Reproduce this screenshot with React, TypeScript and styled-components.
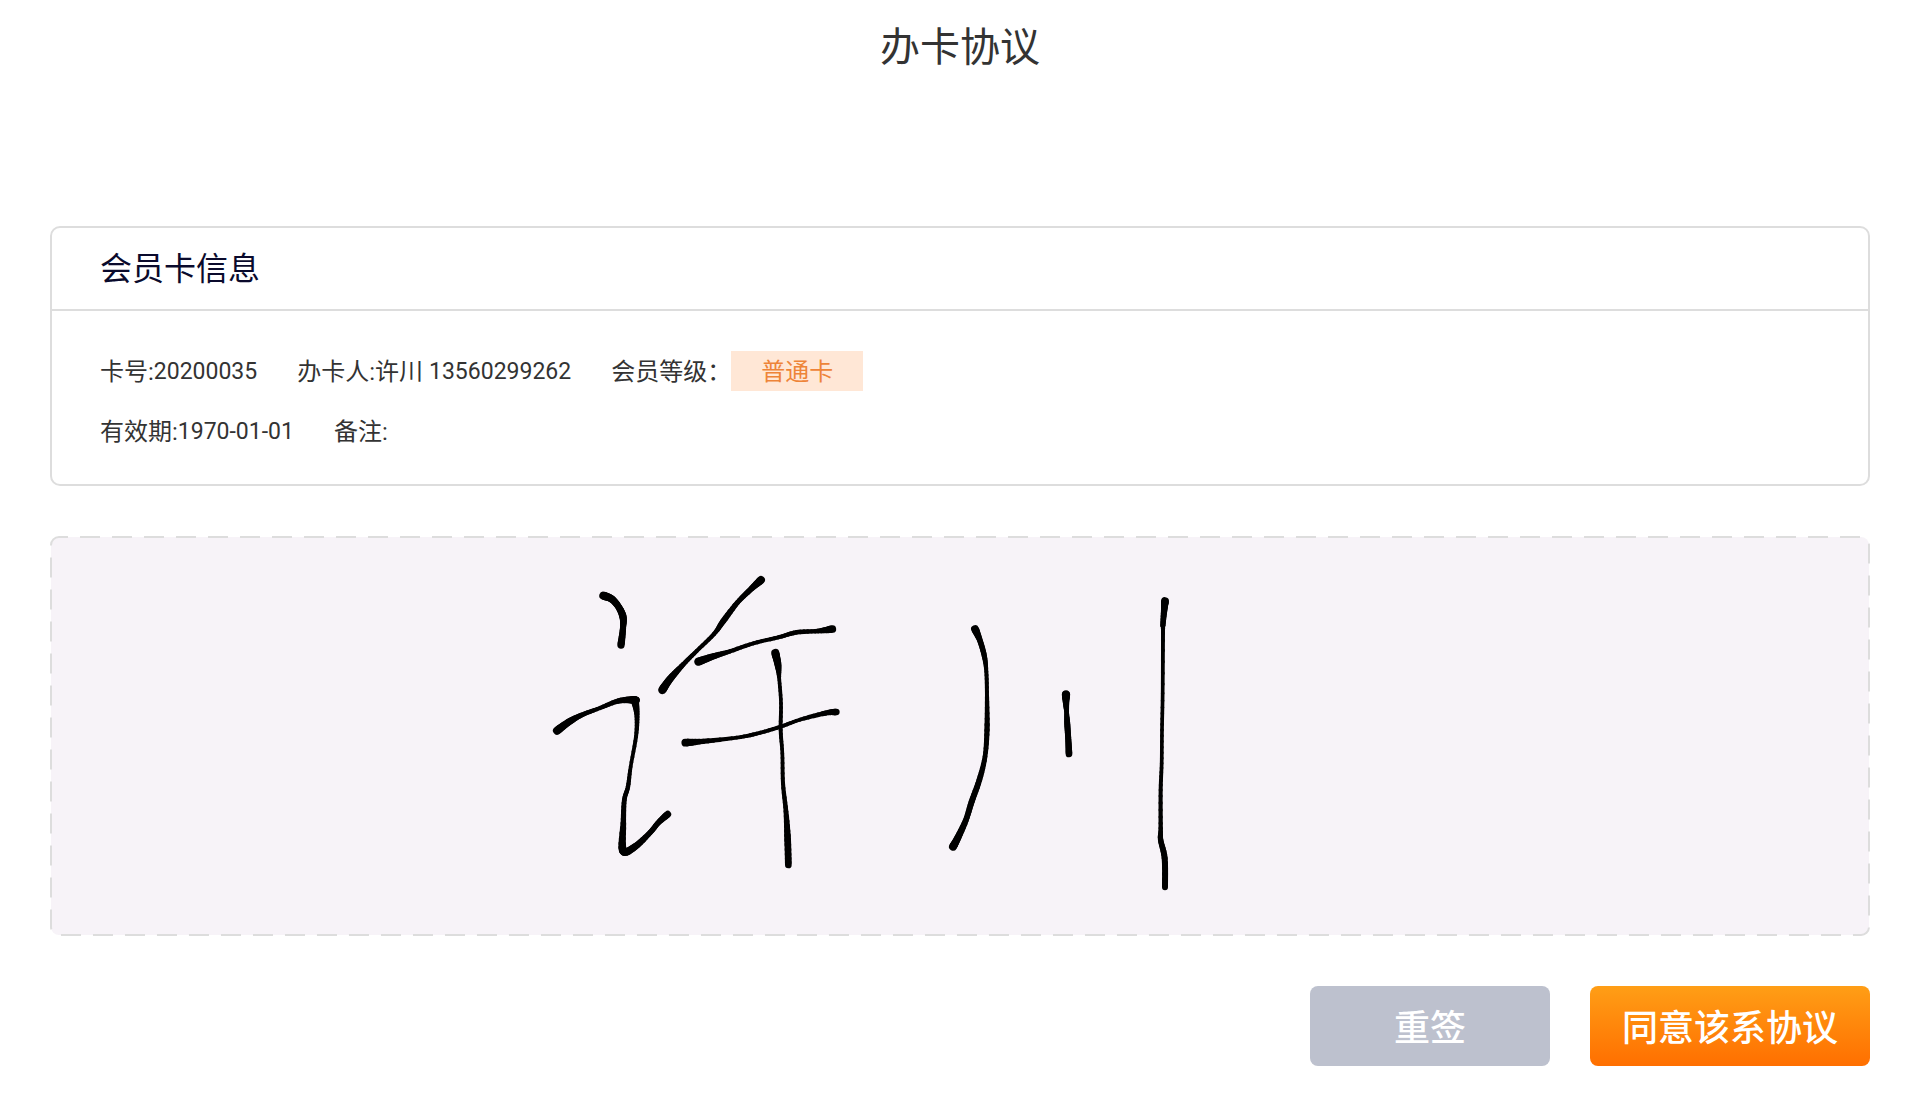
import React from "react";
import styled, { createGlobalStyle } from "styled-components";

const GlobalStyle = createGlobalStyle`
  *, *::before, *::after { box-sizing: border-box; }
  body {
    margin: 0;
    background: #fff;
    color: #333;
    font-family: Roboto, "Noto Sans CJK SC", sans-serif;
  }
`;

const Page = styled.div`
  display: flex;
  flex-direction: column;
  padding: 0 50px 50px;
`;

const Title = styled.h1`
  margin: 0 0 130px;
  font-size: 40px;
  line-height: 96px;
  font-weight: 400;
  text-align: center;
`;

const Stack = styled.main`
  display: flex;
  flex-direction: column;
  gap: 50px;
`;

const Card = styled.section`
  border: 2px solid #ddd;
  border-radius: 10px;
`;

const CardTitle = styled.h2`
  margin: 0;
  padding: 1px 48px 0;
  border-bottom: 2px solid #ddd;
  color: #0a0a2c;
  font-size: 32px;
  line-height: 80px;
  font-weight: 400;
`;

const CardBody = styled.div`
  display: flex;
  flex-direction: column;
  gap: 20px;
  padding: 40px 48px 33px;
`;

const InfoRow = styled.div`
  display: flex;
  gap: 40px;
  height: 40px;
  font-size: 24px;
  line-height: 42px;
`;

const Field = styled.span`
  display: flex;
  white-space: pre;
`;

const Digits = styled.span`
  font-size: 23px;
`;

const Tag = styled.span`
  height: 40px;
  padding: 0 30px;
  background: #ffe7d6;
  color: #ee8438;
`;

const Pad = styled.div`
  position: relative;
  height: 400px;
  overflow: hidden;
`;

const PadFrame = styled.svg`
  position: absolute;
  inset: 0;
  width: 100%;
  height: 100%;
`;

const Ink = styled.svg`
  position: relative;
  display: block;
  height: 100%;
`;

const Actions = styled.footer`
  display: flex;
  justify-content: flex-end;
  gap: 40px;
`;

const Button = styled.button<{ $primary?: boolean }>`
  width: ${(p) => (p.$primary ? 280 : 240)}px;
  height: 80px;
  padding: 0 0 2px;
  border: 0;
  border-radius: 8px;
  background: ${(p) => (p.$primary ? "linear-gradient(#ff9e16, #ff6f00)" : "#bdc1ce")};
  color: #fff;
  font-family: inherit;
  font-size: 36px;
  font-weight: 500;
  cursor: pointer;
`;

/* A pen sample: x, y, line width. */
type Sample = [number, number, number];

const xu: Sample[][] = [
  [[190, 107, 25], [215, 117, 22], [236, 141, 20], [249, 171, 22], [249, 205, 18], [243, 255, 22]],
  [[51, 512, 25], [88, 485, 21], [125, 465, 15], [180, 444, 12], [235, 423, 15], [283, 420, 23], [286, 428, 23], [291, 470, 15], [288, 530, 12], [272, 620, 11], [264, 680, 13], [253, 720, 14], [250, 790, 16], [249, 872, 24], [285, 860, 21], [330, 818, 16], [355, 788, 16], [383, 763, 21]],
  [[663, 60, 25], [630, 90, 17], [592, 128, 15], [550, 183, 18], [522, 222, 13], [470, 273, 12], [430, 313, 14], [390, 357, 21], [367, 390, 25]],
  [[475, 305, 26], [520, 289, 19], [570, 274, 13], [640, 250, 12], [715, 232, 12], [770, 217, 14], [835, 213, 13], [877, 207, 23]],
  [[436, 548, 25], [490, 544, 16], [590, 533, 11], [650, 521, 12], [722, 500, 12], [780, 479, 11], [858, 459, 15], [889, 456, 20]],
  [[706, 279, 25], [714, 315, 21], [718, 360, 11], [723, 430, 11], [722, 510, 12], [727, 580, 11], [729, 670, 12], [738, 755, 14], [743, 840, 20], [745, 915, 20]],
];

const chuan: Sample[][] = [
  [[135, 147, 25], [150, 182, 17], [163, 228, 16], [169, 275, 12], [171, 350, 12], [171, 450, 16], [165, 530, 14], [148, 600, 17], [125, 665, 18], [107, 722, 17], [81, 778, 21], [69, 800, 24]],
  [[408, 343, 26], [408, 364, 20], [410, 400, 14], [412, 435, 18], [415, 480, 18], [417, 522, 20]],
  [[705, 63, 24], [703, 85, 20], [699, 132, 16], [699, 160, 12], [698, 340, 11], [696, 450, 11], [695, 550, 11], [692, 630, 12], [692, 745, 13], [692, 780, 16], [704, 835, 18], [705, 922, 18]],
];

const STEPS = 6;

/* Catmull-Rom value between b and c. */
const spline = (a: number, b: number, c: number, d: number, t: number) =>
  b + 0.5 * t * (c - a + t * (2 * a - 5 * b + 4 * c - d + t * (3 * (b - c) + d - a)));

function smooth(samples: Sample[]): Sample[] {
  const result: Sample[] = [samples[0]];
  for (let i = 0; i < samples.length - 1; i++) {
    const b = samples[i];
    const c = samples[i + 1];
    const a = samples[i - 1] ?? b;
    const d = samples[i + 2] ?? c;
    for (let s = 1; s <= STEPS; s++) {
      const t = s / STEPS;
      result.push([
        spline(a[0], b[0], c[0], d[0], t),
        spline(a[1], b[1], c[1], d[1], t),
        b[2] + (c[2] - b[2]) * t,
      ]);
    }
  }
  return result;
}

function PenStroke({ samples }: { samples: Sample[] }) {
  const points = smooth(samples);
  return (
    <g stroke="#000" strokeLinecap="round">
      {points.slice(1).map((p, i) => (
        <line key={i} x1={points[i][0]} y1={points[i][1]} x2={p[0]} y2={p[1]} strokeWidth={p[2]} />
      ))}
    </g>
  );
}

const FrameRect = styled.rect`
  width: calc(100% - 2px);
  height: calc(100% - 2px);
  fill: #f7f3f8;
  stroke: #ddd;
  stroke-width: 2px;
  stroke-dasharray: 20 12;
  stroke-dashoffset: 11px;
`;

function SignaturePad() {
  return (
    <Pad>
      <PadFrame aria-hidden="true">
        <FrameRect x="1" y="1" rx="8" />
      </PadFrame>
      <Ink viewBox="0 0 5460 1200" preserveAspectRatio="xMinYMin meet" role="img" aria-label="许川">
        <g transform="translate(1470 72)">
          {xu.map((samples, i) => <PenStroke key={i} samples={samples} />)}
        </g>
        <g transform="translate(2640 132)">
          {chuan.map((samples, i) => <PenStroke key={i} samples={samples} />)}
        </g>
      </Ink>
    </Pad>
  );
}

export default function App() {
  return (
    <>
      <GlobalStyle />
      <Page>
        <Title>办卡协议</Title>
        <Stack>
          <Card>
            <CardTitle>会员卡信息</CardTitle>
            <CardBody>
              <InfoRow>
                <Field>卡号:<Digits>20200035</Digits></Field>
                <Field>办卡人:许川 <Digits>13560299262</Digits></Field>
                <Field>会员等级：<Tag>普通卡</Tag></Field>
              </InfoRow>
              <InfoRow>
                <Field>有效期:<Digits>1970-01-01</Digits></Field>
                <Field>备注:</Field>
              </InfoRow>
            </CardBody>
          </Card>
          <SignaturePad />
          <Actions>
            <Button type="button">重签</Button>
            <Button type="button" $primary>同意该系协议</Button>
          </Actions>
        </Stack>
      </Page>
    </>
  );
}
